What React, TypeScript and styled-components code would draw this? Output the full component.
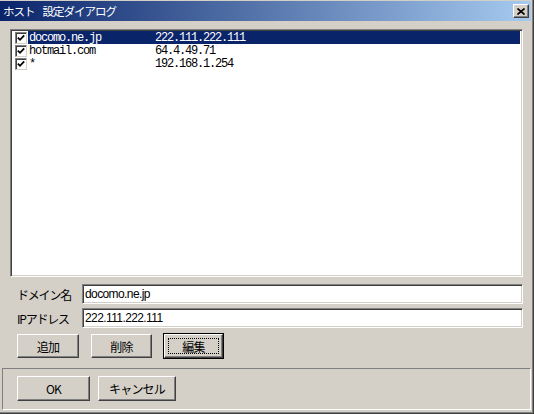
import React from "react";
import styled, { createGlobalStyle, css } from "styled-components";

const GlobalStyle = createGlobalStyle`
  html, body { margin: 0; padding: 0; background: #d4d0c8; }
  * { box-sizing: border-box; }
`;

const uiFont = `"Noto Sans CJK JP", "Liberation Sans", sans-serif`;

const Window = styled.div`
  width: 534px;
  height: 414px;
  background: #d4d0c8;
  border-right: 1px solid #404040;
  border-bottom: 1px solid #404040;
  box-shadow: inset -1px -1px 0 #808080;
  display: flex;
  flex-direction: column;
  font-family: ${uiFont};
`;

const TitleBar = styled.div`
  margin-top: 1px;
  margin-right: 2px;
  height: 20px;
  background: linear-gradient(to right, #0a246a, #a6caf0);
  display: flex;
  align-items: center;
  justify-content: space-between;
  padding: 0 2px 0 3px;
`;

const TitleText = styled.span`
  color: #ffffff;
  font-size: 11.5px;
  letter-spacing: -1px;
  white-space: pre;
  line-height: 20px;
`;

const TitleGap = styled.span`
  display: inline-block;
  width: 8px;
`;

const CloseButton = styled.div`
  width: 16px;
  height: 14px;
  background: #d4d0c8;
  border-top: 1px solid #ffffff;
  border-left: 1px solid #ffffff;
  border-right: 1px solid #404040;
  border-bottom: 1px solid #404040;
  box-shadow: inset -1px -1px 0 #808080;
  display: flex;
  align-items: center;
  justify-content: center;
`;

const Main = styled.div`
  padding: 8px 10px 0 10px;
  display: flex;
  flex-direction: column;
`;

const sunken = css`
  border-top: 1px solid #808080;
  border-left: 1px solid #808080;
  border-bottom: 1px solid #ffffff;
  border-right: 1px solid #ffffff;
  box-shadow: inset 1px 1px 0 #404040, inset -1px -1px 0 #d4d0c8;
`;

const ListBox = styled.div`
  ${sunken};
  height: 248px;
  background: #ffffff;
  padding: 1px 2px 0 3px;
  display: flex;
  flex-direction: column;
`;

const Row = styled.div`
  height: 13px;
  display: flex;
  align-items: center;
`;

const Check = styled.div`
  width: 12px;
  height: 12px;
  margin: 0 1px 0 1px;
  border-top: 1px solid #808080;
  border-left: 1px solid #808080;
  border-bottom: 1px solid #d4d0c8;
  border-right: 1px solid #d4d0c8;
  box-shadow: inset 1px 1px 0 #404040;
  background: #fff;
  display: flex;
  align-items: center;
  justify-content: center;
  flex: none;
`;

const RowText = styled.div<{ $selected?: boolean }>`
  flex: 1;
  height: 13px;
  padding-left: 1px;
  display: flex;
  align-items: center;
  font-family: "Liberation Mono", monospace;
  font-size: 12px;
  letter-spacing: -1.2px;
  white-space: pre;
  background: ${(p) => (p.$selected ? "#0a246a" : "transparent")};
  color: ${(p) => (p.$selected ? "#ffffff" : "#000000")};
`;

const FormRows = styled.div`
  margin-top: 7px;
  display: flex;
  flex-direction: column;
  gap: 4px;
`;

const FormRow = styled.div`
  display: flex;
  align-items: center;
  height: 20px;
`;

const Label = styled.div`
  width: 72px;
  padding-left: 7px;
  font-size: 12px;
  letter-spacing: -1.2px;
  white-space: nowrap;
  color: #000;
`;

const Field = styled.div`
  ${sunken};
  flex: 1;
  height: 20px;
  background: #fff;
  padding-left: 2px;
  display: flex;
  align-items: center;
  font-family: "Liberation Sans", sans-serif;
  font-size: 12px;
  letter-spacing: -0.6px;
  color: #000;
`;

const ButtonRow = styled.div`
  margin-top: 6px;
  padding-left: 7px;
  display: flex;
  gap: 12px;
`;

const Button = styled.div<{ $w: number; $h?: number; $default?: boolean }>`
  width: ${(p) => p.$w}px;
  height: ${(p) => p.$h ?? 24}px;
  background: #d4d0c8;
  border-top: 1px solid #ffffff;
  border-left: 1px solid #ffffff;
  border-right: 1px solid #404040;
  border-bottom: 1px solid #404040;
  box-shadow: inset -1px -1px 0 #808080;
  display: flex;
  align-items: center;
  justify-content: center;
  font-size: 12px;
  letter-spacing: -0.8px;
  color: #000;
  ${(p) =>
    p.$default &&
    css`
      outline: 1px solid #000;
    `}
`;

const Focus = styled.span`
  border: 1px dotted #000;
  width: calc(100% - 6px);
  height: calc(100% - 6px);
  display: flex;
  align-items: center;
  justify-content: center;
`;

const Footer = styled.div`
  margin: 10px 2px 3px 2px;
  height: 42px;
  border-top: 1px solid #808080;
  border-left: 1px solid #808080;
  border-bottom: 1px solid #ffffff;
  border-right: 1px solid #ffffff;
  padding: 7px 0 0 14px;
  display: flex;
  gap: 8px;
`;

const CheckMark = () => (
  <svg width="8" height="8" viewBox="0 0 8 8">
    <path d="M0.8 3.6 L3 5.8 L7.2 1.4" fill="none" stroke="#000" strokeWidth="1.8" />
  </svg>
);

const CloseIcon = () => (
  <svg width="8" height="7" viewBox="0 0 8 7">
    <path d="M0.5 0.5 L7.5 6.5 M7.5 0.5 L0.5 6.5" stroke="#000" strokeWidth="1.6" />
  </svg>
);

const entries = [
  { domain: "docomo.ne.jp", ip: "222.111.222.111" },
  { domain: "hotmail.com", ip: "64.4.49.71" },
  { domain: "*", ip: "192.168.1.254" },
];

export default function App() {
  return (
    <>
      <GlobalStyle />
      <Window>
        <TitleBar>
          <TitleText>
            ホスト<TitleGap />設定ダイアログ
          </TitleText>
          <CloseButton>
            <CloseIcon />
          </CloseButton>
        </TitleBar>
        <Main>
          <ListBox>
            {entries.map((e, i) => (
              <Row key={e.domain}>
                <Check>
                  <CheckMark />
                </Check>
                <RowText $selected={i === 0}>{e.domain.padEnd(21, " ") + e.ip}</RowText>
              </Row>
            ))}
          </ListBox>
          <FormRows>
            <FormRow>
              <Label>ドメイン名</Label>
              <Field>docomo.ne.jp</Field>
            </FormRow>
            <FormRow>
              <Label>IPアドレス</Label>
              <Field>222.111.222.111</Field>
            </FormRow>
          </FormRows>
          <ButtonRow>
            <Button $w={62}>追加</Button>
            <Button $w={61}>削除</Button>
            <Button $w={59} $default>
              <Focus>編集</Focus>
            </Button>
          </ButtonRow>
        </Main>
        <Footer>
          <Button $w={73} $h={25}>OK</Button>
          <Button $w={78} $h={25}>キャンセル</Button>
        </Footer>
      </Window>
    </>
  );
}
